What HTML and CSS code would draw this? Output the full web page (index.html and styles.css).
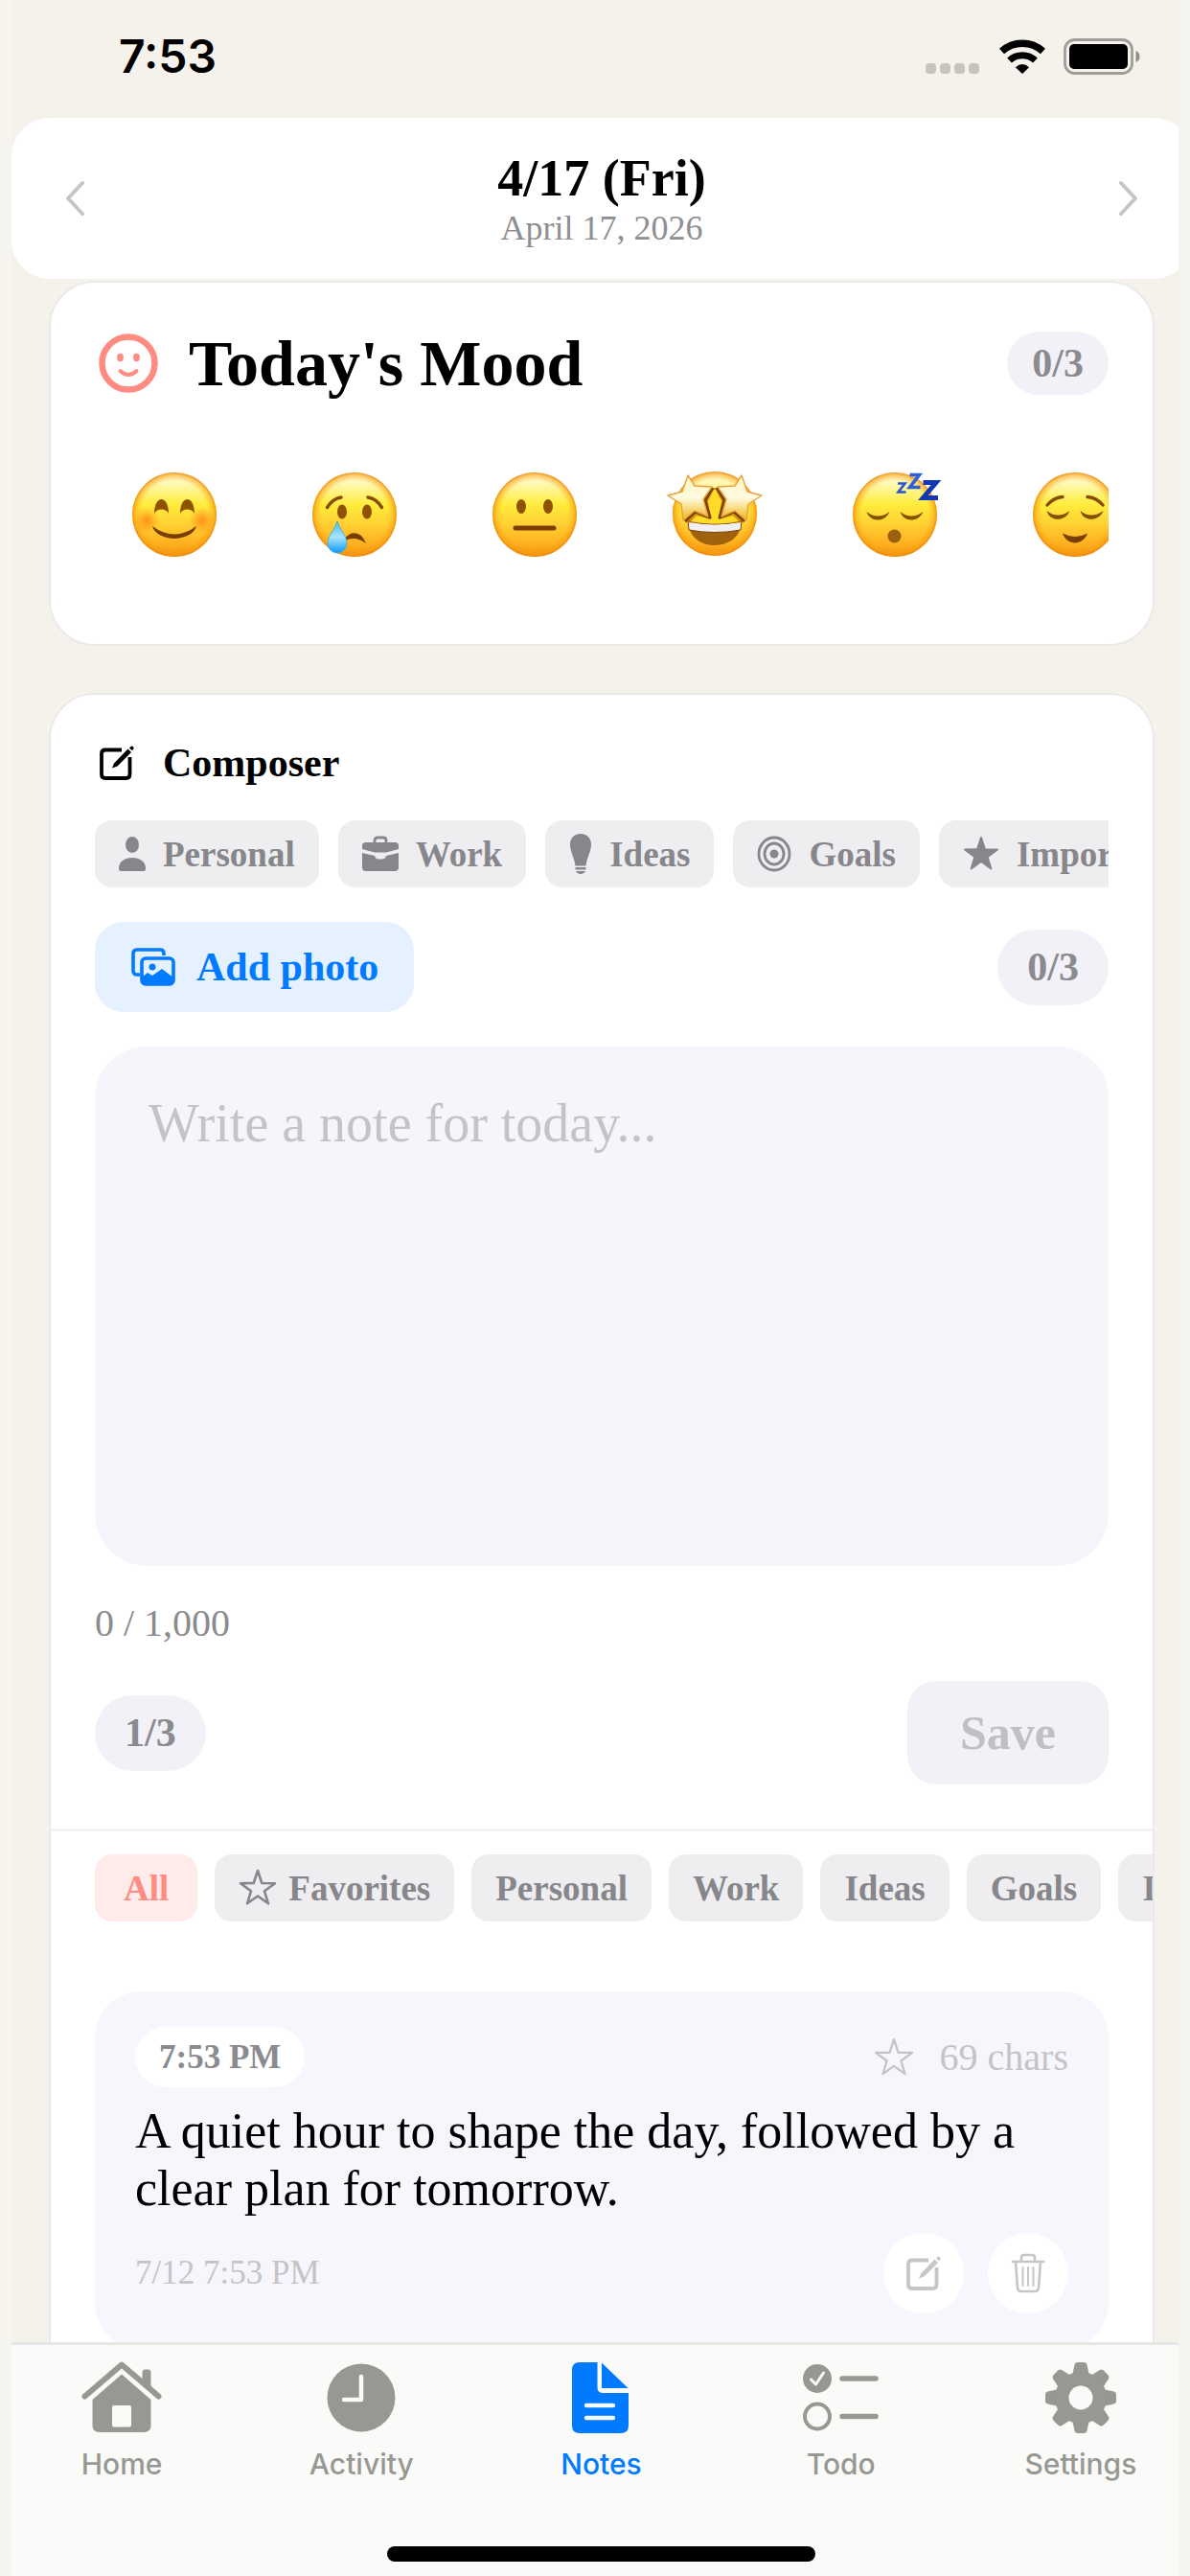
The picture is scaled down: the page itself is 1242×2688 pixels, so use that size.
FILE: index.html
```html
<!DOCTYPE html>
<html lang="en">
<head>
<meta charset="utf-8">
<meta name="viewport" content="width=device-width, initial-scale=1">
<title>Notes</title>
<link rel="stylesheet" href="styles.css">
</head>
<body>
<svg class="defs" width="0" height="0" aria-hidden="true">
  <defs>
    <linearGradient id="face" x1="0" y1="0" x2="0" y2="1">
      <stop offset="0" stop-color="#fffbd0"/>
      <stop offset=".12" stop-color="#fff9b8"/>
      <stop offset=".38" stop-color="#ffec3c"/>
      <stop offset=".6" stop-color="#ffd234"/>
      <stop offset=".85" stop-color="#ffb01f"/>
      <stop offset="1" stop-color="#ee9210"/>
    </linearGradient>
    <radialGradient id="rim">
      <stop offset=".8" stop-color="#f79a10" stop-opacity="0"/>
      <stop offset=".93" stop-color="#f99d12" stop-opacity=".5"/>
      <stop offset="1" stop-color="#ee850c" stop-opacity=".9"/>
    </radialGradient>
    <radialGradient id="blush">
      <stop offset="0" stop-color="#ff7a10" stop-opacity=".75"/>
      <stop offset="1" stop-color="#ff8c10" stop-opacity="0"/>
    </radialGradient>
    <linearGradient id="tear" x1="0" y1="0" x2="0" y2="1">
      <stop offset="0" stop-color="#4fb8f0"/>
      <stop offset=".5" stop-color="#a8e4ff"/>
      <stop offset="1" stop-color="#0a98f5"/>
    </linearGradient>
    <linearGradient id="star" x1="0" y1="0" x2="0" y2="1">
      <stop offset="0" stop-color="#fff6c0"/>
      <stop offset=".5" stop-color="#fffbe0"/>
      <stop offset="1" stop-color="#f0b416"/>
    </linearGradient>
    <g id="ball">
      <circle cx="50" cy="50" r="44" fill="url(#face)"/>
      <circle cx="50" cy="50" r="44" fill="url(#rim)"/>
    </g>
    <path id="star-outline" d="M20 2L24.300 15L38 15.200L27 23.300L31 36.300L20 28.500L9 36.300L13 23.300L2 15.200L15.700 15Z"/>
    <g id="pencil-square">
      <path d="M25 6.500H8Q4 6.500 4 10.500V32Q4 36 8 36H29.500Q33.500 36 33.500 32V14" fill="none" stroke="currentColor" stroke-width="3.800"/>
      <path d="M15 25.500L17 20.500L31.500 5.500L35 9L20.500 23.500ZM33 4.500L34.500 3Q36 2 37 3.200Q38.200 4.500 37.200 5.700L36 7.200Z" fill="currentColor"/>
    </g>
  </defs>
</svg>

<div class="screen">
  <div class="status">
    <span class="status-time">7:53</span>
    <div class="status-icons">
      <svg width="58" height="38" viewBox="0 0 58 38" fill="#c5c4bf" aria-hidden="true"><rect x="0" y="26" width="11" height="11" rx="4"/><rect x="15" y="26" width="11" height="11" rx="4"/><rect x="30" y="26" width="11" height="11" rx="4"/><rect x="45" y="26" width="11" height="11" rx="4"/></svg>
      <svg width="50" height="38" viewBox="0 0 50 38" aria-hidden="true"><path d="M3.500 13.500A32 32 0 0 1 46.500 13.500" fill="none" stroke="#000" stroke-width="7.500"/><path d="M11.500 23A20 20 0 0 1 38.500 23" fill="none" stroke="#000" stroke-width="7"/><path d="M25 37L17.800 30.200Q25 24 32.200 30.200Z"/></svg>
      <svg width="80" height="38" viewBox="0 0 80 38" aria-hidden="true"><rect x="1.500" y="1.500" width="70" height="35" rx="10" fill="none" stroke="#9f9d9a" stroke-width="2.800"/><rect x="6" y="6" width="61" height="26" rx="5"/><path d="M75.500 13Q79.500 14.500 79.500 19Q79.500 23.500 75.500 25Z" fill="#8f8d8a"/></svg>
    </div>
  </div>

  <main class="content">
    <header class="daybar">
      <button class="arrow" aria-label="Previous day"><svg width="20" height="36" viewBox="0 0 20 36"><path d="M18 2L3 18L18 34"/></svg></button>
      <div class="day">
        <h1>4/17 (Fri)</h1>
        <p>April 17, 2026</p>
      </div>
      <button class="arrow" aria-label="Next day"><svg width="20" height="36" viewBox="0 0 20 36"><path d="M2 2L17 18L2 34"/></svg></button>
    </header>

    <section class="card mood">
      <div class="mood-head">
        <svg width="64" height="64" viewBox="0 0 64 64" aria-hidden="true"><circle cx="32" cy="32" r="27.500" fill="none" stroke="#ff8b82" stroke-width="6.500"/><ellipse cx="23.500" cy="26" rx="3.400" ry="4.200" fill="#ff8b82"/><ellipse cx="40.500" cy="26" rx="3.400" ry="4.200" fill="#ff8b82"/><path d="M23.500 40Q32 48 40.500 40" fill="none" stroke="#ff8b82" stroke-width="4" stroke-linecap="round"/></svg>
        <h2>Today's Mood</h2>
        <span class="pill pill-small">0/3</span>
      </div>
      <div class="moods">
        <button aria-label="Happy"><svg viewBox="0 0 100 100"><use href="#ball"/><circle cx="21" cy="56" r="14" fill="url(#blush)"/><circle cx="79" cy="56" r="14" fill="url(#blush)"/><path fill="#915200" d="M29 49C29 29 44 29 44 49C42 43 31 43 29 49ZM56 49C56 29 71 29 71 49C69 43 58 43 56 49Z"/><path fill="#7a3f00" d="M27 62Q50 79 73 62C71 70 60 75 50 75C40 75 29 70 27 62Z"/></svg></button>
        <button aria-label="Sad"><svg viewBox="0 0 100 100"><use href="#ball"/><path d="M21.500 42.500Q27 33.500 36 32M64 32Q73 33.500 78.500 42.500" fill="none" stroke="#8a4a00" stroke-width="3.400" stroke-linecap="round"/><ellipse cx="37" cy="47" rx="5" ry="7.500" fill="#8f5200"/><ellipse cx="63" cy="47" rx="5" ry="7.500" fill="#8f5200"/><path fill="#7a3f00" d="M40 75C46 66.500 57 67 62 80C54 74 47 74 40 77Z"/><path fill="url(#tear)" stroke="#3aaef0" d="M32 57C35 67 42 72 42 80A10 10 0 0 1 22 80C22 72 29 67 32 57Z"/></svg></button>
        <button aria-label="Neutral"><svg viewBox="0 0 100 100"><use href="#ball"/><ellipse cx="36" cy="41.500" rx="5" ry="7.500" fill="#8f5200"/><ellipse cx="64" cy="41.500" rx="5" ry="7.500" fill="#8f5200"/><path d="M30 64H70" stroke="#7a3f00" stroke-width="5" stroke-linecap="round"/></svg></button>
        <button aria-label="Excited"><svg viewBox="0 0 100 100"><use href="#ball" y="-1"/><path fill="#a0620a" d="M22 56Q50 63 78 56C78 72 66 82 50 82C34 82 22 72 22 56Z"/><path fill="#f0f0f4" stroke="#7a4000" d="M22 57Q50 63 78 57L77 66Q50 71 23 66Z"/><path fill="#c87800" opacity=".75" d="M47 22L39 35L45 54L29 48L19 58L50 60L81 58L71 48L55 54L61 35L53 22Z"/><path fill="#ffdc28" d="M49 24L43 36L46 55L31 51L25 57Q50 62 75 57L69 51L54 55L57 36L51 24Z"/><path d="M48 22L40 35L45 53L30 47L19 57M52 22L60 35L55 53L70 47L81 57" fill="none" stroke="#7a4300" stroke-width="3" stroke-linejoin="round"/><path fill="url(#star)" stroke="#e9a040" stroke-width="1.400" stroke-linejoin="round" d="M22 9L29 20L47 21L38 34L43 52L29 46L17 56L15 39L1 30L16 26ZM78 9L71 20L53 21L62 34L57 52L71 46L83 56L85 39L99 30L84 26Z"/></svg></button>
        <button aria-label="Sleepy"><svg viewBox="0 0 100 100"><use href="#ball"/><path fill="#855000" d="M20.500 47Q32 56 44.500 47C42 53 37 55.500 32 55.500C27 55.500 22 52 20.500 47ZM55.500 47Q67 56 79.500 47C77 53 72 55.500 67 55.500C62 55.500 57 52 55.500 47Z"/><circle cx="49.500" cy="72.500" r="7" fill="#99600f"/><g fill="none" stroke-linejoin="miter"><path d="M53 17.500H60.500L53.500 26.500H61.500" stroke="#2a55cc" stroke-width="2.600"/><path d="M65.500 8.500H75.500L65.500 21.500H76.500" stroke="#2f60d8" stroke-width="3.600"/><path d="M79.500 16.500H93L79.500 32.500H95" stroke="#1238b4" stroke-width="5"/></g></svg></button>
        <button aria-label="Calm"><svg viewBox="0 0 100 100"><use href="#ball"/><path d="M21 40Q28 32 37 31.500M63 31.500Q72 32 79 40" fill="none" stroke="#8a4a00" stroke-width="3.400" stroke-linecap="round"/><path fill="#855000" d="M20.500 46Q32 55 44.500 46C42 52 37 54.800 32 54.800C27 54.800 22 52 20.500 46ZM55.500 46Q67 55 79.500 46C77 52 72 54.800 67 54.800C62 54.800 57 52 55.500 46Z"/><path fill="#7a3f00" d="M37 69.500Q50 76.500 63 69.500C61 76 55 79.500 50 79.500C45 79.500 39 76 37 69.500Z"/></svg></button>
      </div>
    </section>

    <section class="card notes">
      <div class="composer">
        <h3><svg width="40" height="40" viewBox="0 0 40 40" aria-hidden="true"><use href="#pencil-square"/></svg>Composer</h3>

        <div class="chips chips-labels">
          <button class="chip"><svg width="28" height="38" viewBox="0 0 28 38" fill="currentColor"><ellipse cx="14" cy="9.500" rx="7" ry="8.500"/><path d="M2.500 37Q0 37 0 34.500C0 27 6 23 14 23C22 23 28 27 28 34.500Q28 37 25.500 37Z"/></svg>Personal</button>
          <button class="chip"><svg width="38" height="38" viewBox="0 0 38 38" fill="currentColor"><path d="M13 8V5Q13 2 16 2H22Q25 2 25 5V8" fill="none" stroke="currentColor" stroke-width="2.800"/><path d="M3.500 7H34.500Q38 7 38 10.500V14L25 17.500H13L0 14V10.500Q0 7 3.500 7ZM0 18L13 21Q14 24.500 17 24.500H21Q24 24.500 25 21L38 18V33Q38 37 34 37H4Q0 37 0 33Z"/></svg>Work</button>
          <button class="chip"><svg width="24" height="42" viewBox="0 0 24 42" fill="currentColor"><path d="M12 0C19 0 23 5 23 11C23 19 19 23 17.500 33.500H6.500C5 23 1 19 1 11C1 5 5 0 12 0ZM6.500 35H17.500V37.500H6.500ZM7 39H17Q15.500 42 12 42Q8.500 42 7 39Z"/></svg>Ideas</button>
          <button class="chip"><svg width="36" height="38" viewBox="0 0 36 38" fill="none" stroke="currentColor" stroke-width="2.800"><ellipse cx="18" cy="19" rx="16" ry="17"/><ellipse cx="18" cy="19" rx="10" ry="11"/><circle cx="18" cy="19" r="4.500" fill="currentColor" stroke="none"/></svg>Goals</button>
          <button class="chip"><svg width="38" height="40" viewBox="0 0 40 40" fill="currentColor" stroke="currentColor" stroke-width="2" stroke-linejoin="round"><use href="#star-outline"/></svg>Important</button>
        </div>

        <div class="row">
          <button class="photo"><svg width="48" height="40" viewBox="0 0 48 40" aria-hidden="true"><path d="M10 28H7Q3 28 3 24V6Q3 2 7 2H31Q35 2 35 6V8" fill="none" stroke="currentColor" stroke-width="3.600"/><rect x="12" y="11" width="33" height="27" rx="4" fill="none" stroke="currentColor" stroke-width="3.600"/><circle cx="23" cy="20" r="3.500" fill="currentColor"/><path d="M12 31L18 26L23 29L33 22L45 31V36Q45 38 43 38H14Q12 38 12 36Z" fill="currentColor"/></svg>Add photo</button>
          <span class="pill">0/3</span>
        </div>

        <textarea aria-label="Note" placeholder="Write a note for today..."></textarea>
        <p class="counter">0 / 1,000</p>

        <div class="row">
          <span class="pill">1/3</span>
          <button class="save" disabled>Save</button>
        </div>
      </div>

      <div class="history">
        <div class="chips">
          <button class="chip chip-on">All</button>
          <button class="chip chip-star"><svg width="40" height="40" viewBox="0 0 40 40" fill="none" stroke="currentColor" stroke-width="2.600" stroke-linejoin="round"><use href="#star-outline"/></svg>Favorites</button>
          <button class="chip">Personal</button>
          <button class="chip">Work</button>
          <button class="chip">Ideas</button>
          <button class="chip">Goals</button>
          <button class="chip">Important</button>
        </div>

        <article class="note">
          <div class="row">
            <time class="note-time">7:53 PM</time>
            <div class="note-meta">
              <button class="icon-button" aria-label="Favorite"><svg width="42" height="42" viewBox="0 0 40 40" fill="none" stroke="currentColor" stroke-width="2.200" stroke-linejoin="round"><use href="#star-outline"/></svg></button>
              <span>69 chars</span>
            </div>
          </div>
          <p class="note-text">A quiet hour to shape the day, followed by a clear plan for tomorrow.</p>
          <div class="row">
            <time class="note-date">7/12 7:53 PM</time>
            <div class="note-actions">
              <button class="round" aria-label="Edit"><svg width="40" height="40" viewBox="0 0 40 40"><use href="#pencil-square"/></svg></button>
              <button class="round" aria-label="Delete"><svg width="36" height="42" viewBox="0 0 36 42" fill="none" stroke="currentColor" stroke-width="2.600" stroke-linecap="round"><path d="M2 9H34M11 9V5Q11 2 14 2H22Q25 2 25 5V9M5 9L7 36Q7.300 40 11 40H25Q28.700 40 29 36L31 9"/><path d="M12.500 15V34M18 15V34M23.500 15V34" stroke-width="2"/></svg></button>
            </div>
          </div>
        </article>
      </div>
    </section>
  </main>

  <nav class="tabbar">
    <div class="tabs">
      <a href="#home"><svg width="84" height="76" viewBox="0 0 84 76"><path d="M64 23V12Q64 10 66 10H70Q72 10 72 12V31" fill="currentColor" stroke="currentColor"/><path d="M3.500 37.500L42 4.500L80.500 37.500" fill="none" stroke="currentColor" stroke-width="6" stroke-linecap="round" stroke-linejoin="round"/><path fill="currentColor" fill-rule="evenodd" d="M42 14.500L72.500 41V68Q72.500 75 65 75H19Q11.500 75 11.500 68V41ZM34 47Q32 47 32 49V67Q32 69.500 34 69.500H50Q52 69.500 52 67V49Q52 47 50 47Z"/></svg>Home</a>
      <a href="#activity"><svg width="84" height="76" viewBox="0 0 84 76"><circle cx="42" cy="39" r="35.500" fill="currentColor"/><path d="M42 17V41H24" fill="none" stroke="#fafaf8" stroke-width="4.500" stroke-linecap="round" stroke-linejoin="round"/></svg>Activity</a>
      <a href="#notes" class="active" aria-current="page"><svg width="84" height="76" viewBox="0 0 84 76"><path fill="currentColor" d="M20 2H38.500V28Q38.500 34 44.500 34H71V68Q71 76 63 76H20Q12 76 12 68V10Q12 2 20 2ZM43 2.500L70.500 29H43Z"/><path d="M27 47H55M27 60H55" stroke="#f4f8ff" stroke-width="4.400" stroke-linecap="round"/></svg>Notes</a>
      <a href="#todo"><svg width="84" height="76" viewBox="0 0 84 76" fill="none" stroke="currentColor" stroke-linecap="round"><circle cx="17" cy="19" r="15" fill="currentColor" stroke="none"/><path d="M10.500 20L15.500 25L23.500 13" stroke="#fafaf8" stroke-width="3" stroke-linejoin="round"/><circle cx="17" cy="58.500" r="13" stroke-width="4"/><path d="M43 19H78M43 58.500H78" stroke-width="5.500"/></svg>Todo</a>
      <a href="#settings"><svg width="84" height="76" viewBox="0 0 84 76"><g fill="currentColor"><g id="teeth"><path id="tooth" d="M33 16L35.500 4.500Q36 2 39 2H45Q48 2 48.500 4.500L51 16V62L48.500 73.500Q48 76 45 76H39Q36 76 35.500 73.500L33 62Z"/><use href="#tooth" transform="rotate(90 42 39)"/></g><use href="#teeth" transform="rotate(45 42 39)"/><circle cx="42" cy="39" r="27"/></g><circle cx="42" cy="39" r="12.500" fill="#fafaf8"/></svg>Settings</a>
    </div>
    <div class="home-indicator"></div>
  </nav>
</div>
</body>
</html>
```
FILE: styles.css
```css
* {
  box-sizing: border-box;
}

body {
  margin: 0;
  background: #f5f4ef;
  color: #000;
  font-family: Charter, "Liberation Serif", "Times New Roman", serif;
}

h1,
h2,
h3,
p {
  margin: 0;
}

button {
  margin: 0;
  padding: 0;
  border: 0;
  background: none;
  color: inherit;
  font: inherit;
}

svg {
  display: block;
  flex: none;
}

.defs {
  position: absolute;
}

.screen {
  display: flex;
  flex-direction: column;
  height: 100vh;
  margin: 0 12px;
  overflow: hidden;
  background: #f5f2eb;
}

/* Status bar */

.status {
  display: flex;
  flex: none;
  align-items: center;
  justify-content: space-between;
  height: 123px;
  padding: 0 40px 6px 112px;
}

.status-time {
  font: 600 48px/56px Inter, sans-serif;
}

.status-icons {
  display: flex;
  gap: 18px;
}

/* Scrolling content */

.content {
  flex: 1;
  min-height: 0;
  margin-right: -14px;
  overflow: hidden;
}

.daybar {
  display: flex;
  align-items: center;
  justify-content: space-between;
  height: 168px;
  padding: 0 56px;
  border-radius: 40px;
  background: #fff;
}

.arrow {
  color: #c6c6c9;
}

.arrow path {
  fill: none;
  stroke: currentColor;
  stroke-width: 4;
  stroke-linecap: round;
  stroke-linejoin: round;
}

.day {
  text-align: center;
}

.day h1 {
  font-size: 54px;
  line-height: 62px;
}

.day p {
  color: #8e8e93;
  font-size: 36px;
  line-height: 42px;
}

.card {
  margin: 2px 39px 0;
  border: 2px solid #ebeae8;
  border-radius: 48px;
  background: #fff;
}

.pill {
  padding: 0 31px;
  border-radius: 40px;
  background: #f2f1f8;
  color: #8a8a8f;
  font-size: 42px;
  font-weight: 700;
  line-height: 79px;
}

.pill-small {
  padding: 0 26px;
  line-height: 66px;
}

/* Mood */

.mood {
  padding: 48px 46px 85px;
}

.mood-head {
  display: flex;
  align-items: center;
  gap: 31px;
  height: 72px;
  padding-left: 3px;
}

.mood-head h2 {
  flex: 1;
  font-size: 68px;
  line-height: 72px;
}

.moods {
  display: flex;
  gap: 88px;
  margin-top: 72px;
  padding-left: 33px;
  overflow: hidden;
}

.moods button {
  flex: none;
  width: 100px;
  height: 100px;
}

/* Composer */

.notes {
  margin-top: 49px;
  overflow: hidden;
}

.composer {
  display: flex;
  flex-direction: column;
  gap: 36px;
  padding: 47px 46px 46px;
}

.composer h3 {
  display: flex;
  align-items: center;
  gap: 28px;
  padding-left: 3px;
  font-size: 42px;
  line-height: 48px;
}

.chips {
  display: flex;
  gap: 18px;
  overflow: hidden;
}

.chips-labels {
  gap: 20px;
}

.chip {
  display: flex;
  flex: none;
  align-items: center;
  gap: 18px;
  height: 70px;
  padding: 0 25px;
  border-radius: 18px;
  background: #eeeef0;
  color: #86868b;
  font-size: 37px;
  font-weight: 700;
}

.chip-star {
  gap: 12px;
}

.chip-on {
  padding: 0 30px;
  background: #ffebea;
  color: #ff8b82;
}

.row {
  display: flex;
  align-items: center;
  justify-content: space-between;
}

.photo {
  display: flex;
  align-items: center;
  gap: 21px;
  height: 94px;
  padding: 0 37px;
  border-radius: 30px;
  background: #e5f1ff;
  color: #007aff;
  font-size: 42px;
  font-weight: 700;
}

textarea {
  display: block;
  width: 100%;
  height: 542px;
  padding: 50px 56px;
  border: 0;
  border-radius: 54px;
  outline: 0;
  background: #f6f5fb;
  color: #000;
  font: 56px/60px Charter, "Liberation Serif", "Times New Roman", serif;
  resize: none;
}

textarea::placeholder {
  color: #c4c4c8;
  opacity: 1;
}

.counter {
  color: #8a8a8f;
  font-size: 40px;
  line-height: 48px;
}

.save {
  height: 108px;
  padding: 0 55px;
  border-radius: 30px;
  background: #f2f1f8;
  color: #bfbfc4;
  font-size: 50px;
  font-weight: 700;
}

/* History */

.history {
  padding: 24px 0 46px 46px;
  border-top: 3px solid #f2f2f3;
}

.note {
  display: flex;
  flex-direction: column;
  gap: 16px;
  margin: 73px 46px 0 0;
  padding: 37px 42px;
  border-radius: 48px;
  background: #f7f6fc;
}

.note-time {
  padding: 0 25px;
  border-radius: 32px;
  background: #fff;
  color: #8a8a8f;
  font-size: 35px;
  font-weight: 700;
  line-height: 63px;
}

.note-meta {
  display: flex;
  align-items: center;
  gap: 27px;
  color: #c4c4c8;
  font-size: 40px;
}

.note-text {
  font-size: 52px;
  line-height: 60px;
}

.note-date {
  color: #c4c4c8;
  font-size: 35px;
}

.note-actions {
  display: flex;
  gap: 25px;
}

.round {
  display: grid;
  place-items: center;
  width: 84px;
  height: 84px;
  border-radius: 50%;
  background: #fff;
  color: #c6c6c9;
}

/* Tab bar */

.tabbar {
  flex: none;
  margin-right: -13px;
  border-top: 3px solid #e7e7e5;
  background: #fafaf8;
}

.tabs {
  display: grid;
  grid-template-columns: repeat(5, 1fr);
  margin: 0 -10px;
  padding-top: 16px;
}

.tabs a {
  display: flex;
  flex-direction: column;
  align-items: center;
  gap: 14px;
  color: #989893;
  font: 500 30px/36px Inter, sans-serif;
  text-decoration: none;
}

.tabs .active {
  color: #007aff;
}

.home-indicator {
  width: 447px;
  height: 16px;
  margin: 68px auto 15px;
  border-radius: 8px;
  background: #000;
}
```
